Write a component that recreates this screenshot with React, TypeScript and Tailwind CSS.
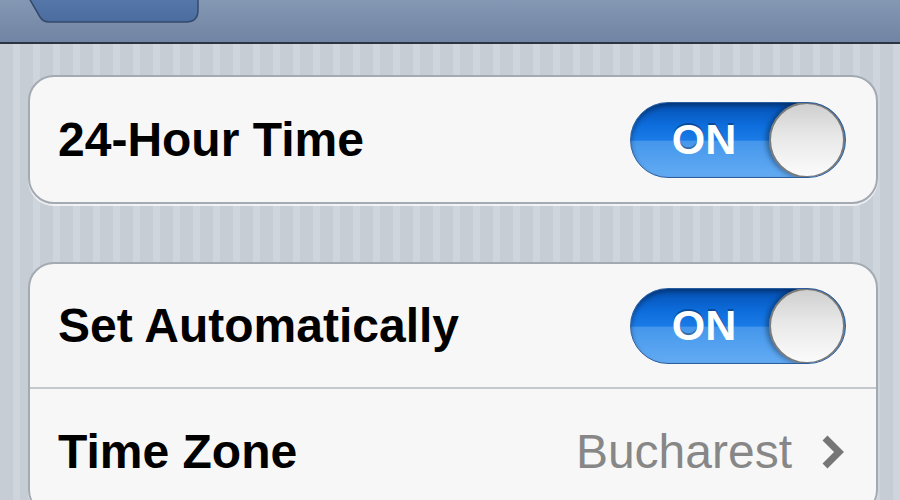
// iOS 5 style settings page, "Date & Time"

function Toggle() {
  return (
    <div className="flex h-[76px] w-[216px] items-center overflow-hidden rounded-full border border-[#2c5e9e] bg-[linear-gradient(to_bottom,#0550b3_0%,#0d6ddc_30%,#1a7be6_50%,#4597ec_52%,#63abf3_100%)] shadow-[inset_0_3px_5px_rgba(0,0,0,0.35)]">
      <div className="flex flex-1 justify-center pl-[8px] text-[43px] font-bold leading-none text-white [text-shadow:0_-2px_0_rgba(0,0,0,0.3)]">
        ON
      </div>
      <div className="h-[76px] w-[76px] shrink-0 rounded-full border-2 border-[#7a7a7a] bg-[linear-gradient(to_bottom,#cfcfcf_0%,#e8e8e8_45%,#fbfbfb_100%)] shadow-[-3px_0_5px_rgba(0,0,0,0.35)]" />
    </div>
  );
}

function Row({
  label,
  children,
  divider,
}: {
  label: string;
  children: React.ReactNode;
  divider?: boolean;
}) {
  return (
    <div
      className={
        "flex h-[125px] items-center justify-between pl-[28px] pr-[30px]" +
        (divider ? " border-b-2 border-[#c4c7cb]" : "")
      }
    >
      <span className="text-[48px] font-bold leading-none text-black">
        {label}
      </span>
      {children}
    </div>
  );
}

export default function App() {
  return (
    <div className="h-[500px] w-[900px] overflow-hidden bg-[#c7ced6] bg-[image:repeating-linear-gradient(90deg,#c6cdd5_0px,#c6cdd5_13px,#ced5dc_13px,#ced5dc_20px)] font-['Liberation_Sans',Arial,sans-serif]">
      {/* nav bar */}
      <div className="relative h-[44px] overflow-hidden border-b-2 border-[#2b3442] bg-[linear-gradient(to_bottom,#8497b3,#7184a3)]">
        <div className="absolute left-0 right-0 top-[-50px] text-center text-[57px] font-bold leading-none text-[#c9d1dd] [text-shadow:0_-2px_0_rgba(0,0,0,0.4)]">
          Date &amp; Time
        </div>
        <svg
          className="absolute left-[28px] top-0"
          width="172"
          height="24"
          viewBox="0 0 172 24"
        >
          <defs>
            <linearGradient id="back" x1="0" y1="0" x2="0" y2="1">
              <stop offset="0" stopColor="#5577a9" />
              <stop offset="1" stopColor="#4b6c9e" />
            </linearGradient>
          </defs>
          <path
            d="M1 -2 L12 17 Q15 22 21 22 L158 22 Q170 22 170 10 L170 -2 Z"
            fill="url(#back)"
            stroke="#34496b"
            strokeWidth="1.5"
          />
        </svg>
      </div>

      <div className="ml-[28px] mt-[31px] w-[850px]">
        <div className="overflow-hidden rounded-[26px] border-2 border-[#a3aab2] bg-[#f7f7f7] shadow-[0_2px_0_rgba(255,255,255,0.7)]">
          <Row label="24-Hour Time">
            <Toggle />
          </Row>
        </div>

        <div className="mt-[58px] overflow-hidden rounded-[26px] border-2 border-[#a3aab2] bg-[#f7f7f7] shadow-[0_2px_0_rgba(255,255,255,0.7)]">
          <Row label="Set Automatically" divider>
            <Toggle />
          </Row>
          <Row label="Time Zone">
            <div className="flex items-center gap-[28px]">
              <span className="text-[48px] leading-none text-[#878787]">
                Bucharest
              </span>
              <svg width="26" height="36" viewBox="0 0 26 36">
                <polyline
                  points="5,4 19,18 5,32"
                  fill="none"
                  stroke="#767676"
                  strokeWidth="7"
                  strokeLinejoin="miter"
                  strokeLinecap="butt"
                />
              </svg>
            </div>
          </Row>
        </div>
      </div>
    </div>
  );
}
